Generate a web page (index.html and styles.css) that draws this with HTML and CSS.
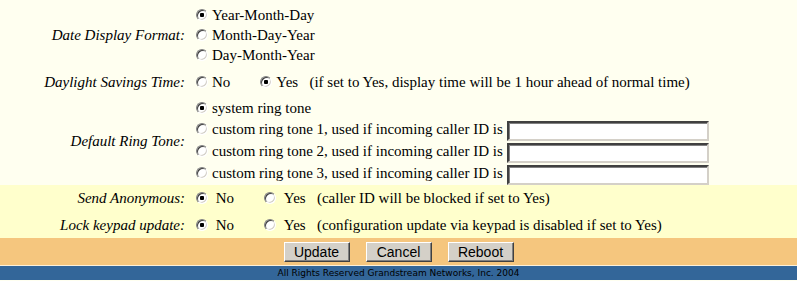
FILE: index.html
```html
<!DOCTYPE html>
<html lang="en">
<head>
    <meta charset="UTF-8">
    <title>Basic Settings</title>
    <link rel="stylesheet" href="styles.css">
</head>
<body>

    <div class="gs-settings">
        <div class="gs-row gs-light gs-date">
            <div class="gs-name">Date Display Format:</div>
            <div class="gs-value">
                <div class="gs-opt"><input type="radio" name="date" checked>Year-Month-Day</div>
                <div class="gs-opt"><input type="radio" name="date">Month-Day-Year</div>
                <div class="gs-opt"><input type="radio" name="date">Day-Month-Year</div>
            </div>
        </div>
        <div class="gs-row gs-light gs-dst">
            <div class="gs-name">Daylight Savings Time:</div>
            <div class="gs-value"><input type="radio" name="dst">No<span class="gs-gap"></span><input type="radio" name="dst" checked>Yes &nbsp; (if set to Yes, display time will be 1 hour ahead of normal time)</div>
        </div>
        <div class="gs-row gs-light gs-ring">
            <div class="gs-name">Default Ring Tone:</div>
            <div class="gs-value">
                <div class="gs-opt"><input type="radio" name="ring" checked>system ring tone</div>
                <div class="gs-opt gs-tall"><input type="radio" name="ring">custom ring tone 1, used if incoming caller ID is <input type="text" class="gs-caller"></div>
                <div class="gs-opt gs-tall"><input type="radio" name="ring">custom ring tone 2, used if incoming caller ID is <input type="text" class="gs-caller"></div>
                <div class="gs-opt gs-tall"><input type="radio" name="ring">custom ring tone 3, used if incoming caller ID is <input type="text" class="gs-caller"></div>
            </div>
        </div>
        <div class="gs-row gs-yellow gs-first">
            <div class="gs-name">Send Anonymous:</div>
            <div class="gs-value"><input type="radio" name="anon" checked>&nbsp;No<span class="gs-gap"></span><input type="radio" name="anon">&nbsp;Yes &nbsp; (caller ID will be blocked if set to Yes)</div>
        </div>
        <div class="gs-row gs-yellow">
            <div class="gs-name">Lock keypad update:</div>
            <div class="gs-value"><input type="radio" name="lock" checked>&nbsp;No<span class="gs-gap"></span><input type="radio" name="lock">&nbsp;Yes &nbsp; (configuration update via keypad is disabled if set to Yes)</div>
        </div>
    </div>

    <div class="gs-actions">
        <button type="button">Update</button>
        <button type="button">Cancel</button>
        <button type="button">Reboot</button>
    </div>

    <div class="gs-footer">All Rights Reserved Grandstream Networks, Inc. 2004</div>

</body>
</html>
```

FILE: styles.css
```css
body {
    margin: 0;
    font: 15px "Times New Roman", "Liberation Serif", serif;
    background-color: #fffff0;
    color: #000;
}
.gs-row {
    display: grid;
    grid-template-columns: 185px 1fr;
    align-items: center;
    white-space: nowrap;
    font: 15px "Times New Roman", "Liberation Serif", serif;
}
.gs-light {
    background-color: #fffff0;
}
.gs-yellow {
    background-color: #ffffcc;
    height: 26px;
}
.gs-yellow.gs-first {
    height: 27px;
}
.gs-dst {
    height: 28px;
}
.gs-date {
    padding: 5px 0 3px;
}
.gs-ring {
    padding: 2px 0 1px;
}
.gs-name {
    font: italic 15px "Times New Roman", "Liberation Serif", serif;
    text-align: right;
}
.gs-value {
    padding-left: 11px;
}
.gs-opt {
    height: 20px;
    line-height: 20px;
}
.gs-opt.gs-tall {
    height: 22px;
    line-height: 22px;
}
input[type="radio"] {
    -webkit-appearance: none;
    appearance: none;
    width: 12px;
    height: 12px;
    margin: 0 4px 0 0;
    border-radius: 50%;
    border: 1px solid;
    border-color: #808080 #ffffff #ffffff #808080;
    box-shadow: inset 1px 1px 0 #404040, inset -1px -1px 0 #d4d0c8;
    background-color: #fff;
    vertical-align: -1px;
}
input[type="radio"]:checked {
    background-image: radial-gradient(circle, #000 0, #000 2px, transparent 2.5px);
}
.gs-gap {
    display: inline-block;
    width: 30px;
}
.gs-caller {
    width: 202px;
    height: 20px;
    box-sizing: border-box;
    margin: 0;
    padding: 1px 2px;
    border: 2px solid;
    border-color: #404040 #d4d0c8 #d4d0c8 #404040;
    box-shadow: inset 1px 1px 0 #808080;
    background-color: #fff;
    vertical-align: middle;
}
.gs-actions {
    background-color: #f5c67e;
    text-align: center;
    height: 28px;
    box-sizing: border-box;
    padding-top: 4px;
    border-bottom: 1px solid #fdf0d8;
    font-size: 0;
}
.gs-actions button {
    font: 14px "Liberation Sans", Arial, sans-serif;
    width: 66px;
    height: 20px;
    margin: 0 8px;
    padding: 0;
    background-color: #d4d0c8;
    color: #000;
    border: 1px solid;
    border-color: #ffffff #404040 #404040 #ffffff;
    box-shadow: inset -1px -1px 0 #808080;
}
.gs-footer {
    background-color: #336699;
    color: #000;
    font: 9px "DejaVu Sans", sans-serif;
    text-align: center;
    height: 14px;
    line-height: 14px;
}
```
